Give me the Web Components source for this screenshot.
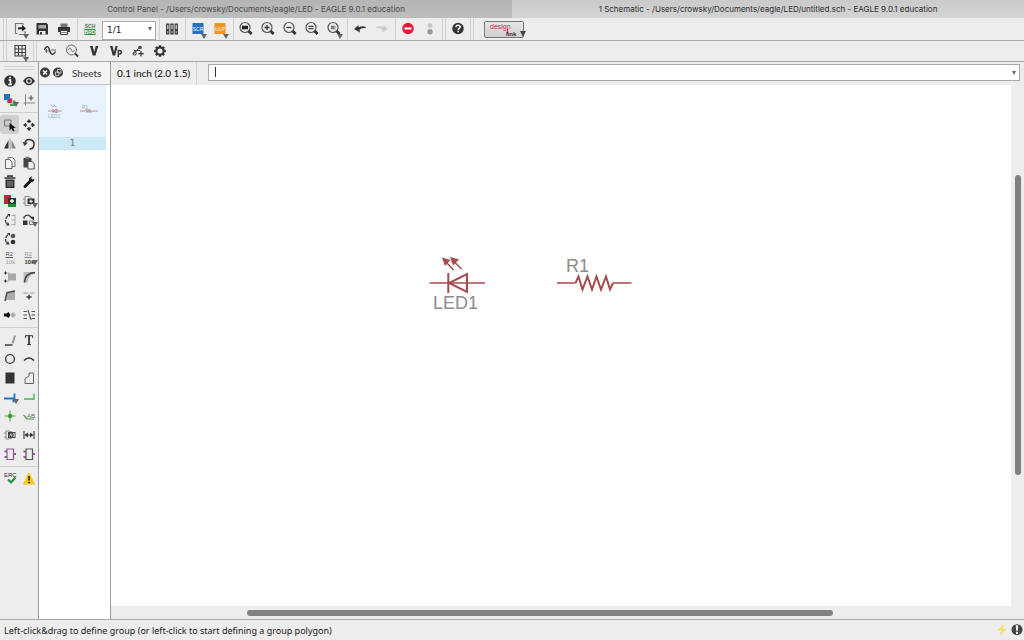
<!DOCTYPE html>
<html lang="en">
<head>
<meta charset="utf-8">
<title>Schematic editor</title>
<style>
html, body { margin: 0; height: 100%; }
body { background: #ededed; overflow: hidden; }
</style>
</head>
<body>
<eagle-app></eagle-app>

<script>
const ARIAL = 'font-family="Liberation Sans, sans-serif"';
const LENS = '<circle cx="8" cy="7.5" r="5" fill="none" stroke="#555" stroke-width="1.2"/><path d="M11.6 11.1L14.6 14.1" stroke="#333" stroke-width="2.8"/>';
const RED = '#a54b4b';

/* Every icon is drawn on an 18 x 18 grid. */
const ICONS = {
  open: '<path d="M12 5V3.5H4.5v10h2M14 11v3.5H8" fill="none" stroke="#777" stroke-width="1.2"/><path d="M7 8.3h5" stroke="#222" stroke-width="2"/><path d="M11 5l4 3.3-4 3.3z" fill="#222"/>',
  save: '<path d="M3.5 3h10l1.5 1.500V14.500H3.500z" fill="#333"/><path d="M5.500 5h7.500v3.500H5.500z" fill="#aaa"/><path d="M6 11h6.500v3.500H6z" fill="#eee"/><path d="M7 12h2v2.500H7z" fill="#333"/>',
  print: '<path d="M5.500 3.500h7V7h-7z" fill="#777"/><path d="M3 7h12v5H3z" fill="#333"/><path d="M5.500 10.500h7v4h-7z" fill="#eee" stroke="#444"/><path d="M6 12.500h6" stroke="#888"/>',
  board: `<path d="M3.500 9h11v6h-11z" fill="#2c8f3a"/><path d="M3.500 3h11v6h-11z" fill="#dfe3df"/><text x="9" y="8" font-size="5" font-weight="700" text-anchor="middle" fill="#5e7a62" ${ARIAL}>SCH</text><text x="9" y="14" font-size="5" font-weight="700" text-anchor="middle" fill="#fff" ${ARIAL}>BRD</text>`,
  library: '<path d="M3 3.500h3.400v11H3zM7.300 3.500h3.400v11H7.300zM11.600 3.500H15v11h-3.400z" fill="#444"/><path d="M4 5h1.500v4H4zM8.300 5h1.500v4H8.300zM12.600 5h1.500v4h-1.500z" fill="#bbb"/><path d="M4 12h1.500M8.300 12h1.500M12.600 12h1.500" stroke="#ddd"/>',
  scr: `<path d="M3.500 3h11v11h-11z" fill="#2671bd"/><text x="9" y="10.500" font-size="5" text-anchor="middle" fill="#fff" ${ARIAL}>SCR</text>`,
  ulp: `<path d="M3.500 3h11v11h-11z" fill="#f7941e"/><text x="9" y="10.500" font-size="5" text-anchor="middle" fill="#fff" ${ARIAL}>ULP</text>`,
  zoomfit: LENS + '<path d="M5 5.700h6v3.600H5z" fill="#222"/>',
  zoomin: LENS + '<path d="M8 5v5M5.500 7.500h5" stroke="#333" stroke-width="1.300"/>',
  zoomout: LENS + '<path d="M5.500 7.500h5" stroke="#333" stroke-width="1.300"/>',
  redraw: LENS + '<path d="M5.500 6.300h5M5.500 8.700h5" stroke="#444" stroke-width="1.200"/>',
  zoomsel: LENS + '<path d="M6 5.700h3.500v3.500H6z" fill="#777"/><path d="M10 5.500v4" stroke="#999"/>',
  undo: '<path d="M3 9l4.500-4v2.300c4-1.800 7.500-1.300 7.500 1-3-.8-5.500.2-6.500 1.700l.5 2.500z" fill="#333"/>',
  redo: '<path d="M15 9l-4.500-4v2.300c-4-1.800-7.500-1.300-7.500 1 3-.8 5.500.2 6.500 1.700l-.5 2.500z" fill="#ccc"/>',
  stop: '<circle cx="9" cy="8.500" r="5.800" fill="#dc1e3c"/><path d="M5.500 8.500h7" stroke="#fff" stroke-width="2"/>',
  go: '<circle cx="9" cy="5.500" r="2.400" fill="#c8c8c8"/><circle cx="9" cy="11.700" r="2.700" fill="#999"/>',
  help: '<circle cx="9" cy="8.500" r="5.700" fill="#333"/><path d="M7 7.300c0-3 4.200-2.600 4.200-.4 0 1.400-2 1.400-2 3M9.200 10.800v1.500" fill="none" stroke="#fff" stroke-width="1.500"/>',
  grid: '<path d="M4 3.500h10.500v10.500H4zM7.500 3.500V14M11 3.500V14M4 7h10.500M4 10.500h10.500" fill="none" stroke="#444" stroke-width="1.100"/>',
  wave: '<path d="M3.500 8C5 3.500 7.500 3.500 8.500 8S12 14 14.500 9.500" fill="none" stroke="#333" stroke-width="1.400"/><path d="M4 9h4M10 8h5M5.500 7v4" stroke="#666"/>',
  probe: '<circle cx="8.500" cy="8" r="5" fill="none" stroke="#666"/><path d="M5.500 8q1.500-4 3 0t3 0" fill="none" stroke="#777"/><path d="M12 11.500L15 14.500" stroke="#333" stroke-width="1.800"/>',
  volt: '<path d="M5 4h2.700L9.200 10l1.500-6h2.500L10.500 13.500H7.700z" fill="#333"/>',
  voltp: '<path d="M3 4h2.500L7 10l1.500-6h2.200L8.200 13.500H5.700z" fill="#333"/><path d="M11.300 15V8.500h1.200a1.800 1.800 0 010 3.600h-1.200" fill="none" stroke="#333" stroke-width="1.400"/>',
  spice: '<path d="M4 12.500L11 5" stroke="#444"/><circle cx="11" cy="5.500" r="1.800" fill="#444"/><circle cx="5.700" cy="11.500" r="1.600" fill="none" stroke="#333"/><path d="M5 8.500h6M12 9v5.500M9.300 11.700h5.400" stroke="#333" stroke-width="1.200"/>',
  gear: '<path d="M9 3.200v11.600M3.200 9h11.600M4.900 4.900l8.200 8.200M13.100 4.900l-8.200 8.200" stroke="#333" stroke-width="2.400"/><circle cx="9" cy="9" r="3.600" fill="#ededed" stroke="#333" stroke-width="2"/>',
  info: '<circle cx="9" cy="9" r="5.800" fill="#333"/><path d="M9 4.700v1.800M7.500 8H9.500v4.500M7.300 12.500h3.700" fill="none" stroke="#fff" stroke-width="1.600"/>',
  eye: '<path d="M3 9q6-8.500 12 0q-6 8.500-12 0z" fill="#333"/><circle cx="9" cy="9" r="2.800" fill="#eee"/><circle cx="9" cy="9" r="1.700" fill="#333"/>',
  layers: '<path d="M9 9.500h5.500V15H9z" fill="#35a853"/><path d="M6 7h5.500v5.500H6z" fill="#d8214a" stroke="#eee" stroke-width=".7"/><path d="M3 3h6v6H3z" fill="#2671bd"/>',
  mark: '<path d="M5.500 3.500v11M3.500 12H15" stroke="#888"/><path d="M11 4.500v5M8.500 7h5" stroke="#555" stroke-width="1.200"/>',
  group: '<path d="M3.500 4h6.500v6H3.500z" fill="#ccc" stroke="#777"/><path d="M8.500 7v7.500l2-1.700 1.500 2.700 1.500-.8-1.300-2.500 2.500-.4z" fill="#111"/>',
  move: '<path d="M9 3l2.400 2.800-2.400 1.200-2.400-1.200zM9 15l2.400-2.800L9 11l-2.400 1.200zM3 9l2.800-2.200L7 9l-1.200 2.200zM15 9l-2.800-2.200L11 9l1.200 2.200z" fill="#333"/>',
  mirror: '<path d="M7.500 5v8.500H3z" fill="#333"/><path d="M10.500 5v8.500H15z" fill="#888"/><path d="M9 3.500v11" stroke="#888" stroke-width=".8"/>',
  rotate: '<path d="M5 7.500a4.700 4.700 0 114.500 6.500" fill="none" stroke="#333" stroke-width="1.500"/><path d="M2.800 7l5 .8-3.300 3.200z" fill="#333"/>',
  copy: '<path d="M7 3.500h4.500L14 6v6.500H7z" fill="#eee" stroke="#777"/><path d="M4.500 5.500h4L11 8v6.500H4.500z" fill="#f4f4f4" stroke="#666"/>',
  paste: '<path d="M3.500 4h8v9.500h-8z" fill="#444"/><path d="M5.500 2.800h4V5h-4z" fill="#777"/><path d="M8 7.500h4l2.200 2V15H8z" fill="#eee" stroke="#555"/>',
  trash: '<path d="M7 4V3h4v1M3.500 5h11" fill="none" stroke="#333" stroke-width="1.700"/><path d="M4.500 6.500h9V15h-9z" fill="#333"/><path d="M7 8v5.500M9 8v5.500M11 8v5.500" stroke="#aaa" stroke-width=".8"/>',
  wrench: '<path d="M5 13.500L11 7.500" stroke="#111" stroke-width="3" stroke-linecap="round"/><path d="M14.500 6a3.300 3.300 0 01-5 2.500L9 5.500 12 3l-.8 2.600 1.300 1z" fill="#111"/>',
  add: '<path d="M3 3h7v9H3z" fill="#cf1f35"/><path d="M7 10.500h8V15H7z" fill="#2d8c3a"/><path d="M7 6h8v6H7z" fill="#333"/><path d="M11 7v4M9 9h4" stroke="#fff" stroke-width="1.300"/>',
  addgate: '<path d="M3 7h2M3 11h2M5 4.500h3a4.500 4.500 0 010 9H5z" fill="none" stroke="#888"/><path d="M7.500 6.500h7v5.500h-7z" fill="#333"/><path d="M11 7.500v3.500M9.300 9.200h3.500" stroke="#fff"/>',
  pinswap: '<path d="M7 4.500Q2.500 9 6 13" fill="none" stroke="#444" stroke-width="1.300" stroke-dasharray="4 1"/><path d="M6 3h3v3zM5 14.500h3.500L7 11z" fill="#333"/><path d="M10.500 4.500H14M10.500 9H14M10.500 13.500H14M14 3.500v11" stroke="#aaa"/>',
  replace: '<path d="M4 8V6q4-4 8 1" fill="none" stroke="#444" stroke-width="1.300"/><path d="M10 6.500l4-1v4zM3 9.500h4.500V14H3z" fill="#333"/><path d="M9.500 10h4v3.500h-4z" fill="#eee" stroke="#777"/>',
  gateswap: '<path d="M7 4.500Q2.500 9 6 13" fill="none" stroke="#444" stroke-width="1.300" stroke-dasharray="4 1"/><path d="M6 3h3v3zM5 14.500h3.500L7 11z" fill="#333"/><circle cx="12" cy="6" r="2.300" fill="#555"/><circle cx="12" cy="12" r="2.300" fill="#333"/>',
  name: `<text x="4.500" y="7" font-size="6" fill="#555" ${ARIAL}>R2</text><path d="M4.500 8.500H12" stroke="#555"/><text x="4.500" y="14.800" font-size="6" fill="#999" ${ARIAL}>10k</text>`,
  value: `<text x="4.500" y="7" font-size="6" fill="#999" ${ARIAL}>R2</text><path d="M4.500 8.500H12" stroke="#888"/><text x="4.500" y="14.800" font-size="6" font-weight="700" fill="#333" ${ARIAL}>10k</text>`,
  smash: '<path d="M7 5.500h8v7H7z" fill="#aaa"/><path d="M4.500 3.500v3M3 5h3M4.500 11.500v3M3 13h3" stroke="#333"/><path d="M5.500 5H9M5.500 13H9" stroke="#888" stroke-dasharray="1 1"/>',
  miter: '<path d="M3.500 4H15v2Q8 7 7.500 14.500h-4z" fill="#bbb"/><path d="M4.500 14.500Q5 5 15 4.500" fill="none" stroke="#444" stroke-width="1.600"/>',
  split: '<path d="M5 13L6.500 5H14v8z" fill="#aaa"/><path d="M4 14L6 5.500 14 4" fill="none" stroke="#444" stroke-width="1.400"/>',
  optimize: '<path d="M3.500 6H8M10 6h4.500" stroke="#999"/><path d="M9 7.500v5M6.500 10h5" stroke="#333" stroke-width="1.300"/>',
  invoke: '<path d="M3 7.500h2.500L7.500 6l2 3-2 3-2-1.500H3z" fill="#111"/><path d="M9.500 9l2.500-3L15 9l-3 3z" fill="#aaa"/>',
  breakout: '<path d="M3.500 5.500H7M3.500 9H7M3.500 12.500H7M11.500 5.500H15M11.500 9H15M11.500 12.500H15M8 4l3 10" stroke="#555" stroke-width="1.100"/>',
  line: '<path d="M4 14h7.500" stroke="#222" stroke-width="1.300"/><path d="M11.500 12.500L14 4.500" stroke="#999" stroke-width="2"/>',
  text: '<path d="M5.400 6.800V4.700h7.200v2.100M7.200 13.500h3.600" fill="none" stroke="#333"/><path d="M9 4.500v9" stroke="#333" stroke-width="1.800"/>',
  circle: '<circle cx="9" cy="9" r="4.400" fill="none" stroke="#444" stroke-width="1.400"/>',
  arc: '<path d="M4 10.500Q9 5.500 14 10.500" fill="none" stroke="#333" stroke-width="1.600"/>',
  rect: '<path d="M4.500 3.500h9v11h-9z" fill="#333"/>',
  polygon: '<path d="M5 14.500V9.500L9 7V4h4.500v10.500z" fill="none" stroke="#666"/>',
  bus: '<path d="M3 10.500h10.500V5.500M12.500 10.500v4" fill="none" stroke="#2277c4" stroke-width="1.800"/>',
  net: '<path d="M4 11h10V5.500" fill="none" stroke="#4caf50" stroke-width="1.300"/>',
  junction: '<path d="M9 3.500v11M3.500 9h11" stroke="#4caf50"/><circle cx="9" cy="9" r="2.200" fill="#2f9e3a"/>',
  label: `<text x="7" y="10.500" font-size="6" fill="#666" ${ARIAL}>AB</text><path d="M3.500 8l3.500 4h7" fill="none" stroke="#3ca94a" stroke-width="1.200"/>`,
  attribute: '<path d="M3 7h2M3 11h2M5 5h3a4 4 0 010 8H5z" fill="none" stroke="#888"/><path d="M7 6h7.500v6H7z" fill="#444"/><path d="M8.500 10.500L10 7.500l.7 3M12 7.500h1.500v3H12z" fill="none" stroke="#ddd" stroke-width=".7"/>',
  dimension: '<path d="M4 5v8M14 5v8M6 9h6" stroke="#444" stroke-width="1.200"/><path d="M4.500 9L8 6.500v5zM13.500 9L10 6.500v5z" fill="#333"/>',
  module: '<path d="M6 4h6.500v10.500H6z" fill="none" stroke="#97519f" stroke-width="1.200"/><path d="M3.500 6.500H6M3.500 12H6M12.500 9H15" stroke="#97519f" stroke-width="2"/>',
  port: '<path d="M6 4h6.500v10.500H6z" fill="none" stroke="#555" stroke-width="1.200"/><path d="M3.500 6.500H6M3.500 12H6M12.500 9H15" stroke="#97519f" stroke-width="2"/>',
  erc: `<text x="3" y="6.500" font-size="6" fill="#333" ${ARIAL}>ERC</text><path d="M7 9.500l3 3 4.500-5" fill="none" stroke="#2c8f3a" stroke-width="2.200"/>`,
  warning: '<path d="M9 3L14.500 14H3.500z" fill="#f8c915" stroke="#f8c915" stroke-linejoin="round"/><path d="M9 6v4.500M9 11.800v1.500" stroke="#222" stroke-width="1.600"/>',
  close: '<circle cx="9" cy="8.500" r="5" fill="#3c3c3c"/><path d="M7 6.500l4 4M11 6.500l-4 4" stroke="#fff" stroke-width="1.400"/>',
  detach: '<circle cx="9" cy="8.500" r="5" fill="#3c3c3c"/><path d="M8.500 5.500h3.500v3.500H8.500zM6.500 8H10v3.500H6.500z" fill="#3c3c3c" stroke="#ddd" stroke-width=".8"/>',
  bolt: '<path d="M11 3L4 9.500h4L7 14.500l7-6.500h-4z" fill="#f8dc70"/>',
  alert: '<circle cx="9" cy="8.700" r="5.500" fill="#444"/><path d="M7.700 4.300h2.600L9.800 9.700H8.200zM8 10.700h2V13H8z" fill="#fff"/>'
};

const define = (tag, markup) => customElements.define(tag, class extends HTMLElement {
  connectedCallback() {
    if (this.shadowRoot) return;
    const template = document.createElement('template');
    template.innerHTML = typeof markup === 'function' ? markup(this) : markup;
    this.attachShadow({ mode: 'open' }).append(template.content.cloneNode(true));
  }
});

const icon = name => `<svg width="18" height="18" viewBox="0 0 18 18" aria-hidden="true">${ICONS[name]}</svg>`;

define('tool-button', el => `
<style>
:host { display: block; flex: none; width: 22px; }
button { position: relative; display: flex; align-items: center; justify-content: center; width: 100%; height: 100%; margin: 0; padding: 0; border: 0; border-radius: 3px; background: none; }
:host([active]) button { background: #cfcfcf; }
svg { flex: none; }
:host([menu]) button::after { content: ""; position: absolute; left: calc(50% + 3px); top: var(--arrow-top, 16px); border: 3px solid transparent; border-top: 5px solid #666; border-bottom: 0; }
</style>
<button type="button" aria-label="${el.getAttribute('label')}">${icon(el.getAttribute('icon'))}</button>`);

define('tool-divider', `
<style>
:host { display: flex; flex: none; justify-content: center; gap: 2px; width: 4px; }
:host([double]) { width: 6px; }
:host([handle]) { width: 9px; }
i { width: 1px; background: #cfcfcf; }
i + i { display: none; }
:host([double]) i + i, :host([handle]) i + i { display: block; }
:host([flat]) { flex-direction: column; width: auto; height: 6px; }
:host([flat]) i { width: auto; height: 1px; }
:host([flat][handle]) { height: 6px; padding: 0 4px; }
</style><i></i><i></i>`);

define('tool-bar', `
<style>
:host { display: flex; box-sizing: border-box; border-bottom: 1px solid #a9a9a9; background: #ededed; }
</style><slot></slot>`);

define('tool-grid', `
<style>
:host { display: grid; grid-template-columns: 19px 19px; grid-auto-rows: 19px; --arrow-top: 12px; }
::slotted(*) { width: 19px; }
</style><slot></slot>`);

define('window-tab', `
<style>
:host { display: block; flex: 1; min-width: 0; height: 18px; background: linear-gradient(#b4b4b4, #bdbdbd); color: #484848; font: 8px/19px Inter, sans-serif; text-align: center; white-space: nowrap; }
:host([selected]) { background: linear-gradient(#cacaca, #d4d4d4); color: #2c2c2c; }
</style><slot></slot>`);

define('sheet-select', `
<style>
:host { display: block; position: relative; width: 54px; margin: 1px 1px 2px; }
select { appearance: none; width: 100%; height: 100%; padding: 0 4px; border: 1px solid #aaa; border-radius: 0; background: #fff; color: #222; font: 9px "DejaVu Sans", sans-serif; }
:host::after { content: ""; position: absolute; right: 4px; top: 8px; border: 2px solid transparent; border-top: 4px solid #666; border-bottom: 0; }
</style>
<select aria-label="Sheet"><option>1/1</option></select>`);

define('design-link', `
<style>
:host { display: block; width: 40px; margin: 3px 9px 2px; }
button { position: relative; display: block; width: 100%; height: 17px; padding: 0; border: 1px solid #777; border-radius: 2px; background: linear-gradient(#e6e6e6, #cfcfcf); }
svg { display: block; }
button::after { content: ""; position: absolute; right: -3px; top: 9px; border: 3px solid transparent; border-top: 6px solid #444; border-bottom: 0; }
</style>
<button type="button" aria-label="design link"><svg width="38" height="15" viewBox="0 0 38 15"><text x="5" y="7" font-size="7" fill="#dc1e4b" ${ARIAL}>design</text><path d="M22.500 7v5" stroke="#dc1e4b" stroke-width="1.200"/><text x="21" y="14" font-size="6" font-weight="700" fill="#333" ${ARIAL}>link</text></svg></button>`);

define('sheets-panel', `
<style>
:host { display: flex; flex-direction: column; box-sizing: border-box; border: solid #999; border-width: 0 1px; background: #fff; color: #444; }
header { display: flex; align-items: center; height: 22px; border-bottom: 1px solid #c4c4c4; background: #f3f3f3; }
header tool-button { width: 12px; height: 18px; }
header tool-button + tool-button { margin-left: 1px; }
h2 { margin: 0 0 0 8px; font: 500 10px/22px Lato, sans-serif; }
figure { margin: 0 4px 0 0; background: #e6f2ff; }
svg { display: block; width: 100%; }
figcaption { height: 13px; background: #cbe9f7; color: #777; font: 9px/13px "DejaVu Sans", sans-serif; text-align: center; }
</style>
<header><tool-button icon="close" label="Close"></tool-button><tool-button icon="detach" label="Detach"></tool-button><h2>Sheets</h2></header>
<figure>
<svg viewBox="0 0 67 52" aria-hidden="true"><g fill="none" stroke="${RED}" stroke-width=".8" opacity=".7"><path d="M9 26h14M14 24v4M18 24v4l-4-2zM12 20l3 2M14.500 20l3 2M41 26h5l1-1.500 1 3 1-3 1 3 1-3 1 3 1-1.500h6"/></g><text x="9" y="33" font-size="5" fill="#aaa" ${ARIAL}>LED1</text><text x="43" y="24" font-size="5" fill="#aaa" ${ARIAL}>R1</text></svg>
<figcaption>1</figcaption></figure>`);

define('command-bar', `
<style>
:host { display: flex; height: 23px; background: #ededed; color: #222; font: 500 10px/22px Lato, sans-serif; }
output { box-sizing: border-box; width: 86px; padding-left: 6px; border-right: 1px solid #cfcfcf; white-space: nowrap; }
.field { position: relative; flex: 1; margin: 2px 4px 4px 11px; }
input { box-sizing: border-box; display: block; width: 100%; height: 17px; padding: 0 16px 0 6px; border: 1px solid #aaa; background: #fff; font: inherit; outline: 0; }
.caret { position: absolute; left: 7px; top: 3px; width: 1px; height: 10px; background: #333; }
.field::after { content: ""; position: absolute; right: 4px; top: 7px; border: 2px solid transparent; border-top: 4px solid #666; border-bottom: 0; }
</style>
<output>0.1 inch (2.0 1.5)</output>
<div class="field"><input type="text" aria-label="Command"><span class="caret"></span></div>`);

define('scroll-track', `
<style>
:host { display: flex; padding: 4px 0 3px; }
:host([vertical]) { flex-direction: column; padding: 0 3px 0 4px; }
span { flex: var(--before); }
b { flex: var(--size); border-radius: 3px; background: #808080; }
i { flex: var(--after); }
</style><span></span><b></b><i></i>`);

define('schematic-canvas', `
<style>
:host { display: block; overflow: hidden; background: #fff; }
svg { display: block; }
</style>
<svg width="900" height="521" viewBox="111 85 900 521" role="img" aria-label="Schematic">
<g fill="none" stroke="${RED}" stroke-width="1.500">
<path d="M429.500 283H485"/>
<path d="M448.300 273v20M467 274v18l-18-9z" stroke-width="2"/>
<path d="M453.500 270l-6.500-7M461.500 269l-6.500-6.500"/>
<path d="M557 283h18.500M613 283h18.500"/>
<path d="M575.500 283l3-6.500 4 13 5-13 4.500 13 4.500-13 4.500 13 5-13 4 13 3-6.500" stroke-width="2"/>
</g>
<path d="M442 257.500l8.500 2.500-5.500 6zM450 257l9 2.500-6 6z" fill="${RED}"/>
<g fill="#8c8c8c" font-size="18" ${ARIAL}><text x="433" y="309">LED1</text><text x="566" y="272">R1</text></g>
</svg>`);

define('status-bar', `
<style>
:host { display: flex; align-items: center; box-sizing: border-box; height: 21px; padding: 0 0 0 4px; border-top: 1px solid #a9a9a9; background: #ededed; color: #222; font: 9px/19px "Noto Sans", sans-serif; }
span { flex: 1; }
tool-button { width: 15px; }
</style>
<span><slot></slot></span><tool-button icon="bolt" label="Live update"></tool-button><tool-button icon="alert" label="Messages"></tool-button>`);

const buttons = list => list.split(' ').map(item => {
  const name = item.replace(/[+*]/g, '');
  return `<tool-button icon="${name}" label="${name}"${item.includes('+') ? ' menu' : ''}${item.includes('*') ? ' active' : ''}></tool-button>`;
}).join('');
const divider = '<tool-divider></tool-divider>';

define('eagle-app', `
<style>
:host { display: flex; flex-direction: column; height: 100vh; background: #ededed; }
nav { display: flex; }
main { flex: 1; min-height: 0; display: grid; grid-template-columns: 38px 73px minmax(0, 1fr); }
.first { height: 23px; }
.second { height: 21px; }
.second [double] { margin: 0 1px; }
aside { padding-top: 3px; }
.editor { display: grid; grid-template: auto minmax(0, 1fr) 13px / minmax(0, 1fr) 13px; }
command-bar { grid-column: 1 / 3; }
.down { --before: 90; --size: 300; --after: 131; }
.across { --before: 136; --size: 586; --after: 178; }
</style>
<nav><window-tab>Control Panel - /Users/crowsky/Documents/eagle/LED - EAGLE 9.0.1 education</window-tab><window-tab selected>1 Schematic - /Users/crowsky/Documents/eagle/LED/untitled.sch - EAGLE 9.0.1 education</window-tab></nav>
<tool-bar class="first"><tool-divider handle></tool-divider>${buttons('open+ save print')}${divider}${buttons('board')}<sheet-select></sheet-select>${divider}${buttons('library')}${divider}${buttons('scr+ ulp+')}${divider}${buttons('zoomfit zoomin zoomout redraw zoomsel+')}${divider}${buttons('undo redo')}${divider}${buttons('stop go')}<tool-divider double></tool-divider>${buttons('help')}<tool-divider double></tool-divider><design-link></design-link></tool-bar>
<tool-bar class="second"><tool-divider handle></tool-divider>${buttons('grid+')}<tool-divider double></tool-divider>${buttons('wave probe volt voltp spice gear')}</tool-bar>
<main>
<aside><tool-divider flat handle></tool-divider>
<tool-grid>${buttons('info eye layers+ mark')}</tool-grid><tool-divider flat></tool-divider>
<tool-grid>${buttons('group* move mirror rotate copy paste trash wrench add addgate+ pinswap replace+')}${buttons('gateswap')}<span></span>${buttons('name value+ smash miter split optimize invoke breakout')}</tool-grid><tool-divider flat></tool-divider>
<tool-grid>${buttons('line text circle arc rect polygon bus+ net junction label attribute dimension module port')}</tool-grid><tool-divider flat></tool-divider>
<tool-grid>${buttons('erc warning')}</tool-grid></aside>
<sheets-panel></sheets-panel>
<div class="editor"><command-bar></command-bar><schematic-canvas></schematic-canvas><scroll-track vertical class="down"></scroll-track><scroll-track class="across"></scroll-track></div>
</main>
<status-bar>Left-click&amp;drag to define group (or left-click to start defining a group polygon)</status-bar>`);
</script>
</body>
</html>
